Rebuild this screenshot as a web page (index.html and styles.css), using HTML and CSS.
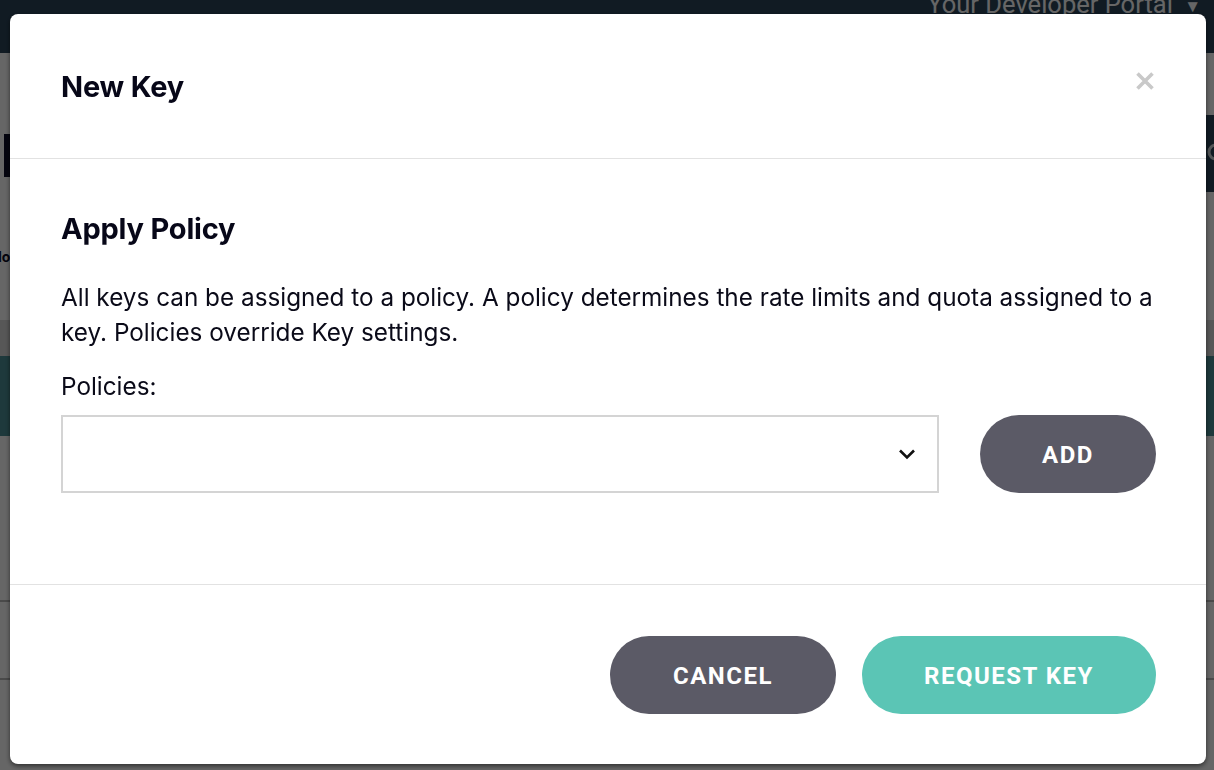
FILE: index.html
```html
<!DOCTYPE html>
<html lang="en">
<head>
<meta charset="utf-8">
<title>New Key</title>
<link rel="stylesheet" href="styles.css">
</head>
<body>
<div class="page">
  <header class="navbar">
    <span class="nav-link">Your Developer Portal <span class="caret">&#9660;</span></span>
  </header>
  <section class="page-head">
    <div class="page-mark"></div>
    <button class="search-btn" type="button" aria-label="Search">
      <svg width="24" height="24" viewBox="0 0 24 24"><circle cx="10" cy="10" r="7" fill="none" stroke="#cfd6da" stroke-width="3"/></svg>
    </button>
  </section>
  <div class="page-sub">lo</div>
  <div class="page-band"></div>
  <div class="page-hero"></div>
  <div class="page-rows">
    <div class="page-row"></div>
    <div class="page-row"></div>
  </div>
</div>

<div class="overlay">
  <div class="modal" role="dialog" aria-labelledby="modal-title">
    <div class="modal-header">
      <h2 class="modal-title" id="modal-title">New Key</h2>
      <button class="close-btn" type="button" aria-label="Close">
        <svg width="20" height="20" viewBox="0 0 20 20"><path d="M2.5 2.5 L17.5 17.5 M17.5 2.5 L2.5 17.5" stroke="#c9c9c9" stroke-width="3.6" stroke-linecap="butt"/></svg>
      </button>
    </div>
    <div class="modal-body">
      <h3 class="section-title">Apply Policy</h3>
      <p class="section-text">All keys can be assigned to a policy. A policy determines the rate limits and quota assigned to a key. Policies override Key settings.</p>
      <label class="field-label" for="policies">Policies:</label>
      <div class="field-row">
        <div class="select-box" id="policies">
          <svg class="chevron" width="18" height="12" viewBox="0 0 18 12"><path d="M2 2.5 L9 9.5 L16 2.5" fill="none" stroke="#111" stroke-width="2.6"/></svg>
        </div>
        <button class="btn btn-dark btn-add" type="button">ADD</button>
      </div>
    </div>
    <div class="modal-footer">
      <button class="btn btn-dark btn-cancel" type="button">CANCEL</button>
      <button class="btn btn-teal btn-request" type="button">REQUEST KEY</button>
    </div>
  </div>
</div>
</body>
</html>
```

FILE: styles.css
```css
* { box-sizing: border-box; }

html, body {
  margin: 0;
  padding: 0;
  height: 100%;
  overflow: hidden;
}

body {
  font-family: "Inter", "Roboto", "Liberation Sans", sans-serif;
  background: #ffffff;
}

/* ---------- page behind the overlay ---------- */
.page {
  width: 100%;
  height: 100%;
  background: #ffffff;
}

.navbar {
  height: 53px;
  background: #2b4459;
  display: flex;
  justify-content: flex-end;
  align-items: flex-start;
  padding-right: 13px;
  overflow: hidden;
}

.nav-link {
  font-family: "Roboto", "Liberation Sans", sans-serif;
  font-size: 25.5px;
  line-height: 1;
  color: #ffffff;
  margin-top: -8px;
}

.caret {
  font-size: 17px;
  vertical-align: middle;
  margin-left: 5px;
}

.page-head {
  height: 141px;
  display: flex;
  justify-content: space-between;
  align-items: flex-start;
  padding-top: 62px;
  padding-left: 4px;
}

.page-mark {
  margin-top: 19px;
  width: 6px;
  height: 43px;
  background: #0c0c26;
}

.search-btn {
  width: 60px;
  height: 77px;
  border: 0;
  background: #2b4459;
  display: flex;
  align-items: center;
  justify-content: flex-start;
  padding: 0;
  margin-right: -52px;
}

.page-sub {
  height: 126px;
  padding-top: 56px;
  font-size: 14px;
  font-weight: 700;
  color: #0c0c26;
  line-height: 14px;
  margin-left: -2px;
}

.page-band {
  height: 36px;
  background: #dadada;
}

.page-hero {
  height: 80px;
  background: #4b8f96;
}

.page-rows {
  padding-top: 164px;
}

.page-row {
  height: 78px;
  border-top: 2px solid #b8b8b8;
}

/* ---------- overlay + modal ---------- */
.overlay {
  position: fixed;
  inset: 0;
  background: rgba(0, 0, 0, 0.6);
  padding: 14px 0 0 10px;
}

.modal {
  width: 1196px;
  height: 750px;
  background: #ffffff;
  border-radius: 8px;
  box-shadow: 0 2px 5px rgba(0, 0, 0, 0.55);
  display: flex;
  flex-direction: column;
  color: #070718;
}

.modal-header {
  height: 145px;
  border-bottom: 1px solid #e2e2e2;
  display: flex;
  justify-content: space-between;
  align-items: center;
  padding: 2px 50px 0 51px;
}

.modal-title {
  margin: 0;
  font-size: 29px;
  font-weight: 700;
  line-height: 34px;
  letter-spacing: -0.2px;
}

.close-btn {
  border: 0;
  background: transparent;
  padding: 0;
  width: 20px;
  height: 20px;
  margin: -13px 1px 0 0;
  cursor: pointer;
}

.modal-body {
  padding: 53px 50px 91px 51px;
  border-bottom: 1px solid #e2e2e2;
}

.section-title {
  margin: 0 0 34px;
  font-size: 29px;
  font-weight: 700;
  line-height: 34px;
  letter-spacing: -0.2px;
}

.section-text {
  margin: 0 0 19px;
  font-size: 24.3px;
  line-height: 35px;
  color: #0a0a18;
}

.field-label {
  display: block;
  margin-bottom: 11px;
  font-size: 24.3px;
  line-height: 35px;
  color: #0a0a18;
}

.field-row {
  display: flex;
  gap: 41px;
  align-items: center;
}

.select-box {
  flex: 1;
  height: 78px;
  border: 2px solid #d4d4d4;
  display: flex;
  justify-content: flex-end;
  align-items: center;
  padding-right: 21px;
}

.btn {
  height: 78px;
  border: 0;
  border-radius: 39px;
  color: #ffffff;
  font-family: "Roboto", "Liberation Sans", sans-serif;
  font-weight: 700;
  font-size: 24px;
  letter-spacing: 1.5px;
  padding-top: 3px;
  cursor: pointer;
}

.btn-dark { background: #5b5a66; }
.btn-teal { background: #5bc5b5; }

.btn-add { width: 176px; }
.btn-cancel { width: 226px; }
.btn-request { width: 294px; }

.modal-footer {
  flex: 1;
  display: flex;
  justify-content: flex-end;
  align-items: center;
  gap: 26px;
  padding-right: 50px;
}
```
